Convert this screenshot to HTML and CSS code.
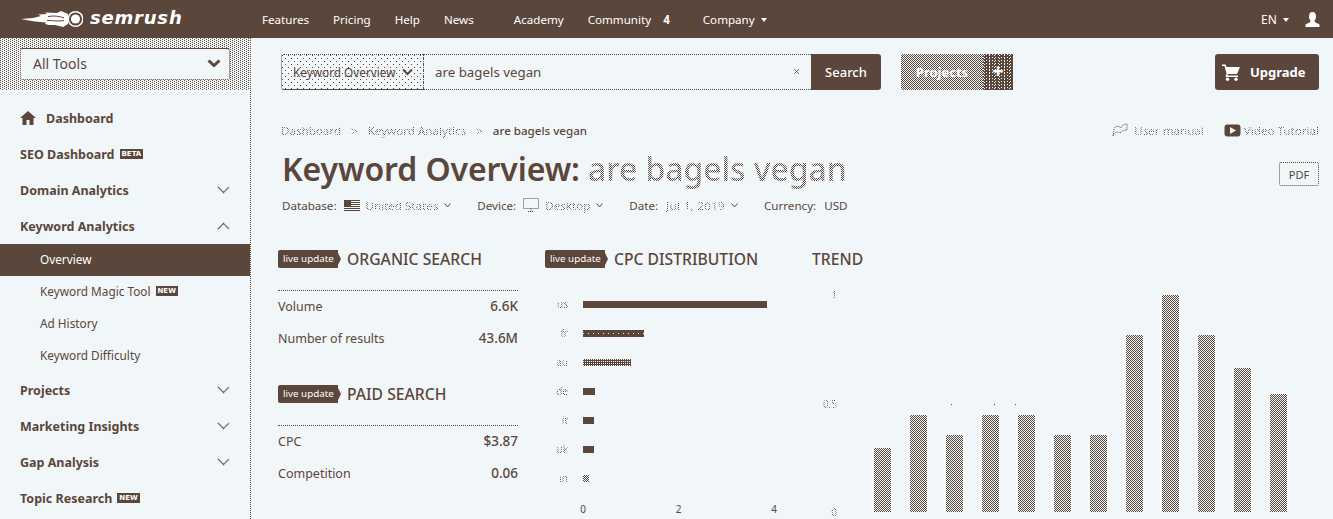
FILE: index.html
```html
<!DOCTYPE html>
<html>
<head>
    <title>Keyword Overview: are bagels vegan</title>
    <link rel="stylesheet" href="styles.css">
</head>
<body>

    <header class="topbar">
        <a class="logo">
            <svg class="logo-mark" width="62" height="18" viewBox="0 0 62 18">
                <path d="M0 9 L12 8 L20 6 L17 4.500 L26 4 L24 2.500 L36 3 L40 1 L47 4 L47 14 L42 17 L34 15 L28 15 L24 14 L25 12.500 L14 11.500 L8 10.500 Z" fill="#fff"/>
                <path d="M27 6.500 C33 5.500 38 6 43 8 M26 10.500 C32 10.500 38 11.500 43 10.500" fill="none" stroke="#5b463b"/>
                <circle cx="54.500" cy="9" r="7.300" fill="#5b463b" stroke="#fff" stroke-width="1.500"/>
                <circle cx="54.500" cy="9" r="4.600" fill="#fff"/>
            </svg>
            <span class="logo-text">semrush</span>
        </a>
        <nav class="topnav">
            <a>Features</a>
            <a>Pricing</a>
            <a>Help</a>
            <a class="gap-after">News</a>
            <a>Academy</a>
            <a>Community <b class="count">4</b></a>
            <a class="company">Company <i class="caret"></i></a>
        </nav>
        <div class="top-right">
            <a>EN <i class="caret"></i></a>
            <svg width="15" height="15" viewBox="0 0 15 15"><path d="M7.500 0 C10 0 11 2 11 4.500 C11 6.500 10 8 9.300 9 C9.500 10.500 12 11 14.500 12.500 L14.500 15 L0.500 15 L0.500 12.500 C3 11 5.500 10.500 5.700 9 C5 8 4 6.500 4 4.500 C4 2 5 0 7.500 0 Z" fill="#fff"/></svg>
        </div>
    </header>

    <div class="page">
        <aside class="sidebar">
            <div class="tools-zone">
                <div class="tools-select">
                    <span>All Tools</span>
                    <svg width="14" height="9" viewBox="0 0 14 9"><path d="M1.500 1.500 L7 6.500 L12.500 1.500" fill="none" stroke="#5b463b" stroke-width="3"/></svg>
                </div>
            </div>
            <ul class="side-menu">
                <li class="side-item">
                    <span class="side-label">
                        <svg class="home-icon" width="16" height="14" viewBox="0 0 16 14"><path d="M8 0 L16 7 L13.500 7 L13.500 14 L9.500 14 L9.500 9 L6.500 9 L6.500 14 L2.500 14 L2.500 7 L0 7 Z" fill="#5b463b"/></svg>
                        Dashboard
                    </span>
                </li>
                <li class="side-item"><span class="side-label">SEO Dashboard <em class="tag">BETA</em></span></li>
                <li class="side-item"><span class="side-label">Domain Analytics</span><svg class="chev" width="13" height="8" viewBox="0 0 13 8"><path d="M1 1 L6.500 6.500 L12 1"/></svg></li>
                <li class="side-item"><span class="side-label">Keyword Analytics</span><svg class="chev" width="13" height="8" viewBox="0 0 13 8"><path d="M1 7 L6.500 1.500 L12 7"/></svg></li>
                <li class="side-sub active"><span>Overview</span></li>
                <li class="side-sub"><span>Keyword Magic Tool</span> <em class="tag">NEW</em></li>
                <li class="side-sub"><span>Ad History</span></li>
                <li class="side-sub"><span>Keyword Difficulty</span></li>
                <li class="side-item"><span class="side-label">Projects</span><svg class="chev" width="13" height="8" viewBox="0 0 13 8"><path d="M1 1 L6.500 6.500 L12 1"/></svg></li>
                <li class="side-item"><span class="side-label">Marketing Insights</span><svg class="chev" width="13" height="8" viewBox="0 0 13 8"><path d="M1 1 L6.500 6.500 L12 1"/></svg></li>
                <li class="side-item"><span class="side-label">Gap Analysis</span><svg class="chev" width="13" height="8" viewBox="0 0 13 8"><path d="M1 1 L6.500 6.500 L12 1"/></svg></li>
                <li class="side-item"><span class="side-label">Topic Research <em class="tag">NEW</em></span></li>
            </ul>
        </aside>

        <main class="content">
            <div class="toolbar">
                <div class="search-type">
                    <span>Keyword Overview</span>
                    <svg width="11" height="8" viewBox="0 0 11 8"><path d="M1 1.500 L5.500 6 L10 1.500" fill="none" stroke="#5b463b" stroke-width="2"/></svg>
                </div>
                <div class="search-input"><span>are bagels vegan</span><span class="clear stipple">×</span></div>
                <button class="search-btn">Search</button>
                <button class="projects-btn"><span class="projects-label">Projects</span><span class="projects-plus">+</span></button>
                <button class="upgrade-btn">
                    <svg width="18" height="17" viewBox="0 0 18 17"><path d="M0 0.500 H3.500 L4.500 3 H18 L15 10 H6 L5.500 11.500 H16 V13 H3.500 L4.500 9.500 L2.500 2 H0 Z" fill="#fff"/><circle cx="5.500" cy="15.300" r="1.700" fill="#fff"/><circle cx="14" cy="15.300" r="1.700" fill="#fff"/></svg>
                    Upgrade
                </button>
            </div>

            <div class="crumb-row">
                <div class="crumbs">
                    <span class="stipple">Dashboard</span>
                    <span class="stipple sep">&gt;</span>
                    <span class="stipple">Keyword Analytics</span>
                    <span class="stipple sep">&gt;</span>
                    <span class="crumb-current">are bagels vegan</span>
                </div>
                <div class="help-links">
                    <svg width="16" height="14" viewBox="0 0 16 14"><path d="M1 13 L2 7 C2 3 6 2 9 5 C10 2 12 1 15 1 L15 7 C12 7 10 8 8 10 C6 8 3 9 1 13 Z" fill="none" stroke="#5b463b" stroke-dasharray="1 1"/></svg>
                    <span class="stipple">User manual</span>
                    <svg class="video-icon" width="17" height="13" viewBox="0 0 17 13"><rect x="0.500" y="0.500" width="16" height="12" rx="3" class="video-box"/><path d="M6 3 L12 6.500 L6 10 Z" class="video-play"/></svg>
                    <span class="stipple">Video Tutorial</span>
                </div>
            </div>

            <div class="title-row">
                <h1><span class="title-lead">Keyword Overview:</span> <span class="stipple">are bagels vegan</span></h1>
                <button class="pdf-btn">PDF</button>
            </div>

            <div class="meta-row">
                <span class="meta-name">Database:</span>
                <svg class="meta-icon" width="16" height="11" viewBox="0 0 16 11"><path d="M0 0.500 H16 M0 2.500 H16 M0 4.500 H16 M0 6.500 H16 M0 8.500 H16 M0 10.500 H16" stroke="#5b463b"/><rect width="7" height="6" fill="#5b463b"/></svg>
                <span class="stipple">United States</span>
                <svg class="mini-chev" width="7" height="5" viewBox="0 0 7 5"><path d="M0.500 0.500 L3.500 4 L6.500 0.500"/></svg>

                <span class="meta-name next">Device:</span>
                <svg class="meta-icon" width="16" height="14" viewBox="0 0 16 14"><path d="M0.500 0.500 H15.500 V10.500 H0.500 Z M5 13.500 H11 M8 10.500 V13.500" fill="none" stroke="#5b463b" stroke-dasharray="1 1"/></svg>
                <span class="stipple">Desktop</span>
                <svg class="mini-chev" width="7" height="5" viewBox="0 0 7 5"><path d="M0.500 0.500 L3.500 4 L6.500 0.500"/></svg>

                <span class="meta-name next">Date:</span>
                <span class="stipple date-value">Jul 1, 2019</span>
                <svg class="mini-chev" width="7" height="5" viewBox="0 0 7 5"><path d="M0.500 0.500 L3.500 4 L6.500 0.500"/></svg>

                <span class="meta-name next">Currency:</span>
                <span class="meta-name usd">USD</span>
            </div>

            <div class="columns">
                <section class="col">
                    <div class="col-head"><span class="live">live update</span><h2>ORGANIC SEARCH</h2></div>
                    <div class="stat-list">
                        <div class="stat"><span>Volume</span><b>6.6K</b></div>
                        <div class="stat"><span>Number of results</span><b>43.6M</b></div>
                    </div>
                    <div class="col-head paid"><span class="live">live update</span><h2>PAID SEARCH</h2></div>
                    <div class="stat-list">
                        <div class="stat"><span>CPC</span><b>$3.87</b></div>
                        <div class="stat"><span>Competition</span><b>0.06</b></div>
                    </div>
                </section>

                <section class="col">
                    <div class="col-head"><span class="live">live update</span><h2>CPC DISTRIBUTION</h2></div>
                    <div class="hbars">
                        <div class="hbar"><span class="stipple">us</span><i style="width:184px"></i></div>
                        <div class="hbar"><span class="stipple">fr</span><i class="specks" style="width:61px"></i></div>
                        <div class="hbar"><span class="stipple">au</span><i class="holes" style="width:48px"></i></div>
                        <div class="hbar"><span class="stipple">de</span><i style="width:12px"></i></div>
                        <div class="hbar"><span class="stipple">it</span><i style="width:11px"></i></div>
                        <div class="hbar"><span class="stipple">uk</span><i style="width:11px"></i></div>
                        <div class="hbar"><span class="stipple">in</span><i class="check" style="width:6px"></i></div>
                    </div>
                    <div class="hbar-axis"><span>0</span><span>2</span><span>4</span></div>
                </section>

                <section class="col trend">
                    <div class="col-head"><h2>TREND</h2></div>
                    <div class="trend-chart">
                        <div class="y-axis"><span class="stipple">1</span><span class="stipple">0.5</span><span class="stipple">0</span></div>
                        <div class="plot">
                            <i class="bar" style="height:64px"></i>
                            <i class="bar" style="height:97px"></i>
                            <i class="bar" style="height:77px"></i>
                            <i class="bar" style="height:97px"></i>
                            <i class="bar" style="height:97px"></i>
                            <i class="bar" style="height:77px"></i>
                            <i class="bar" style="height:77px"></i>
                            <i class="bar" style="height:177px"></i>
                            <i class="bar" style="height:217px"></i>
                            <i class="bar" style="height:177px"></i>
                            <i class="bar" style="height:144px"></i>
                            <i class="bar" style="height:118px"></i>
                            <b class="grid-dot dot-a"></b>
                            <b class="grid-dot dot-b"></b>
                            <b class="grid-dot dot-c"></b>
                        </div>
                    </div>
                </section>
            </div>
        </main>
    </div>

</body>
</html>
```

FILE: styles.css
```css
:root {
    --dark: #5b463b;
    --light: #f1f6f9;
    --checker: conic-gradient(var(--dark) 25%, var(--light) 0 50%, var(--dark) 0 75%, var(--light) 0) 0 0 / 2px 2px;
}

* {
    box-sizing: border-box;
}

html, body {
    height: 519px;
    overflow: hidden;
}

body {
    margin: 0;
    font-family: "Noto Sans", sans-serif;
    font-size: 13px;
    color: var(--dark);
    background-color: var(--light);
}

ul {
    list-style: none;
    margin: 0;
    padding: 0;
}

button {
    font-family: inherit;
    border: none;
    padding: 0;
}

/* text that is only half inked, as in the picture */
.stipple {
    color: transparent;
    background: var(--checker);
    -webkit-background-clip: text;
    background-clip: text;
}

/* top bar */
.topbar {
    display: flex;
    align-items: center;
    height: 38px;
    padding: 0 13px 0 21px;
    background-color: var(--dark);
    color: #fff;
}

.logo {
    display: flex;
    align-items: center;
    width: 241px;
}

.logo-mark {
    flex: none;
}

.logo-text {
    margin: -3px 0 0 7px;
    font-family: "DejaVu Sans", sans-serif;
    font-size: 18px;
    font-weight: bold;
    font-style: italic;
    letter-spacing: 0.8px;
    line-height: 1;
}

.topnav {
    display: flex;
    gap: 24px;
    font-size: 11.600px;
}

.topnav .gap-after {
    margin-right: 16px;
}

.count {
    margin-left: 9px;
}

.company {
    margin-left: 9px;
}

.caret {
    display: inline-block;
    margin-left: 3px;
    vertical-align: middle;
    border-left: 3.500px solid transparent;
    border-right: 3.500px solid transparent;
    border-top: 4px solid #fff;
}

.top-right {
    display: flex;
    align-items: center;
    gap: 16px;
    margin-left: auto;
    font-size: 12px;
}

/* sidebar */
.page {
    display: flex;
    height: 481px;
}

.sidebar {
    flex: none;
    width: 251px;
    border-right: 1px dotted var(--dark);
}

.tools-zone {
    height: 52px;
    padding: 10px 20px;
    background:
        conic-gradient(from 270deg at 1px 1px, var(--dark) 25%, transparent 0) 0 0 / 4px 2px,
        conic-gradient(from 270deg at 1px 1px, var(--dark) 25%, transparent 0) 2px 1px / 4px 2px,
        var(--light);
}

.tools-select {
    display: flex;
    align-items: center;
    justify-content: space-between;
    width: 210px;
    height: 32px;
    padding: 0 8px 2px 12px;
    font-size: 14px;
    background-color: var(--light);
    border: 1px dotted var(--dark);
    border-top-style: solid;
    border-radius: 3px;
}

.side-menu {
    padding-top: 10px;
}

.side-item {
    display: flex;
    align-items: center;
    justify-content: space-between;
    height: 36px;
    padding: 0 20px;
    font-size: 12.500px;
    font-weight: 700;
}

.side-label {
    display: flex;
    align-items: center;
}

.home-icon {
    margin-right: 10px;
}

.side-sub {
    display: flex;
    align-items: center;
    height: 32px;
    padding: 0 0 2px 40px;
    font-size: 11.800px;
}

.side-sub.active {
    background-color: var(--dark);
    color: #fff;
}

.tag {
    margin-left: 5px;
    padding: 0 2px;
    font-family: "DejaVu Sans", sans-serif;
    font-size: 7px;
    line-height: 10px;
    font-style: normal;
    font-weight: 700;
    color: #fff;
    background-color: var(--dark);
}

.chev {
    fill: none;
    stroke: var(--dark);
    stroke-width: 1.500;
    stroke-dasharray: 1 0.500;
}

/* main */
.content {
    flex: 1;
    padding: 16px 14px 0 27px;
}

.toolbar {
    display: flex;
    height: 36px;
    margin-left: 3px;
}

.search-type {
    display: flex;
    align-items: center;
    gap: 6px;
    width: 143px;
    padding-left: 11px;
    font-size: 11.800px;
    border: 1px dotted var(--dark);
    border-bottom-style: solid;
    border-radius: 3px 0 0 3px;
    background:
        conic-gradient(from 270deg at 1px 1px, var(--dark) 25%, transparent 0) 0 0 / 6px 6px,
        conic-gradient(from 270deg at 1px 1px, var(--dark) 25%, transparent 0) 3px 3px / 6px 6px,
        var(--light);
}

.search-input {
    display: flex;
    align-items: center;
    justify-content: space-between;
    width: 387px;
    padding: 0 11px 1px;
    font-size: 13.300px;
    border-top: 1px dotted var(--dark);
    border-bottom: 1px dotted var(--dark);
}

.clear {
    font-size: 12px;
}

.search-btn {
    width: 70px;
    font-size: 13px;
    font-weight: 500;
    color: #fff;
    background-color: var(--dark);
    border-radius: 0 3px 3px 0;
}

.projects-btn {
    display: flex;
    align-items: center;
    width: 112px;
    margin-left: 20px;
    color: #fff;
    font-size: 13px;
    font-weight: 700;
    background: var(--checker);
    border-radius: 2px;
}

.projects-label {
    width: 82px;
}

.projects-plus {
    flex: 1;
    align-self: stretch;
    font-size: 20px;
    font-weight: 700;
    line-height: 34px;
    background:
        conic-gradient(from 270deg at 1px 1px, var(--light) 25%, transparent 0) 0 0 / 3px 3px,
        conic-gradient(from 270deg at 1px 1px, var(--light) 25%, transparent 0) 1px 1px / 5px 3px,
        var(--dark);
}

.upgrade-btn {
    display: flex;
    align-items: center;
    gap: 10px;
    width: 104px;
    margin-left: auto;
    padding-left: 7px;
    font-size: 13px;
    font-weight: 700;
    color: #fff;
    background-color: var(--dark);
    border-radius: 3px;
}

.crumb-row {
    display: flex;
    align-items: center;
    justify-content: space-between;
    height: 18px;
    margin: 31px 0 0 3px;
    font-size: 11.600px;
}

.crumbs {
    display: flex;
    gap: 10px;
}

.crumb-current {
    font-weight: 500;
}

.help-links {
    display: flex;
    align-items: center;
    gap: 6px;
}

.video-icon {
    margin: 0 -3px 0 14px;
}

.video-box {
    fill: var(--dark);
}

.video-play {
    fill: var(--light);
}

.title-row {
    display: flex;
    align-items: center;
    justify-content: space-between;
    height: 44px;
    margin: 9px 0 0 4px;
}

h1 {
    margin: 0 0 2px;
    font-size: 32px;
    font-weight: 500;
    line-height: 42px;
    letter-spacing: -0.100px;
    white-space: nowrap;
}

.title-lead {
    font-weight: 600;
}

.pdf-btn {
    width: 40px;
    height: 24px;
    margin-top: 8px;
    font-size: 11px;
    color: var(--dark);
    background: none;
    border: 1px dotted var(--dark);
    border-radius: 2px;
}

.meta-row {
    display: flex;
    align-items: center;
    gap: 6px;
    height: 18px;
    margin: 4px 0 0 4px;
    font-size: 11.600px;
}

.meta-icon {
    margin-left: 1px;
}

.date-value {
    margin-left: 2px;
    letter-spacing: 0.300px;
}

.meta-name.next {
    margin-left: 20px;
}

.meta-name.usd {
    margin-left: 2px;
}

.mini-chev {
    fill: none;
    stroke: var(--dark);
}

.columns {
    display: flex;
    gap: 27px;
    margin-top: 36px;
}

.col {
    flex: none;
    width: 240px;
}

.col.trend {
    width: 507px;
}

.col-head {
    display: flex;
    align-items: center;
    height: 18px;
}

.col-head.paid {
    margin-top: 30px;
}

.live {
    position: relative;
    flex: none;
    width: 60px;
    height: 18px;
    margin-right: 9px;
    padding-left: 5px;
    font-size: 9.800px;
    line-height: 18px;
    color: #fff;
    background-color: var(--dark);
    border-radius: 2px 0 0 2px;
}

/* arrow tip of the badge */
.live::after {
    content: "";
    position: absolute;
    top: 3px;
    right: -3px;
    border-top: 6px solid transparent;
    border-bottom: 6px solid transparent;
    border-left: 3px solid var(--dark);
}

h2 {
    margin: 0;
    padding-bottom: 1px;
    font-size: 15.700px;
    font-weight: 500;
    white-space: nowrap;
}

.stat-list {
    margin-top: 22px;
    border-top: 1px dotted var(--dark);
}

.stat {
    display: flex;
    align-items: center;
    justify-content: space-between;
    height: 32px;
    padding-bottom: 2px;
    font-size: 12.500px;
}

.stat b {
    font-size: 13.500px;
    font-weight: 500;
}

.hbars {
    margin-top: 22px;
}

.hbar {
    display: flex;
    align-items: center;
    height: 29px;
    padding-bottom: 1px;
    font-size: 10px;
}

.hbar span {
    flex: none;
    width: 23px;
    margin-right: 15px;
    text-align: right;
}

.hbar i {
    height: 7px;
    background-color: var(--dark);
}

.hbar i.specks {
    background:
        conic-gradient(from 270deg at 1px 1px, var(--light) 25%, transparent 0) 0 3px / 5px 7px,
        var(--dark);
}

.hbar i.holes {
    background:
        conic-gradient(from 270deg at 1px 1px, var(--light) 25%, transparent 0) 0 0 / 2px 2px,
        var(--dark);
}

.hbar i.check {
    background: var(--checker);
}

.hbar-axis {
    display: flex;
    justify-content: space-between;
    width: 201px;
    margin: 10px 0 0 33px;
    font-size: 10px;
    line-height: 12px;
}

.hbar-axis span {
    width: 10px;
    text-align: center;
}

.trend-chart {
    display: flex;
    height: 229px;
    margin-top: 21px;
}

.y-axis {
    display: flex;
    flex-direction: column;
    justify-content: space-between;
    align-items: flex-end;
    width: 25px;
    font-size: 10px;
    line-height: 12px;
}

.plot {
    position: relative;
    display: flex;
    align-items: flex-end;
    gap: 19px;
    margin-left: 37px;
    padding-bottom: 6px;
}

.bar {
    width: 17px;
    background: var(--checker);
}

.grid-dot {
    position: absolute;
    top: 115px;
    width: 1px;
    height: 1px;
    background-color: var(--dark);
}

.dot-a {
    left: 77px;
}

.dot-b {
    left: 120px;
}

.dot-c {
    left: 141px;
}
```
